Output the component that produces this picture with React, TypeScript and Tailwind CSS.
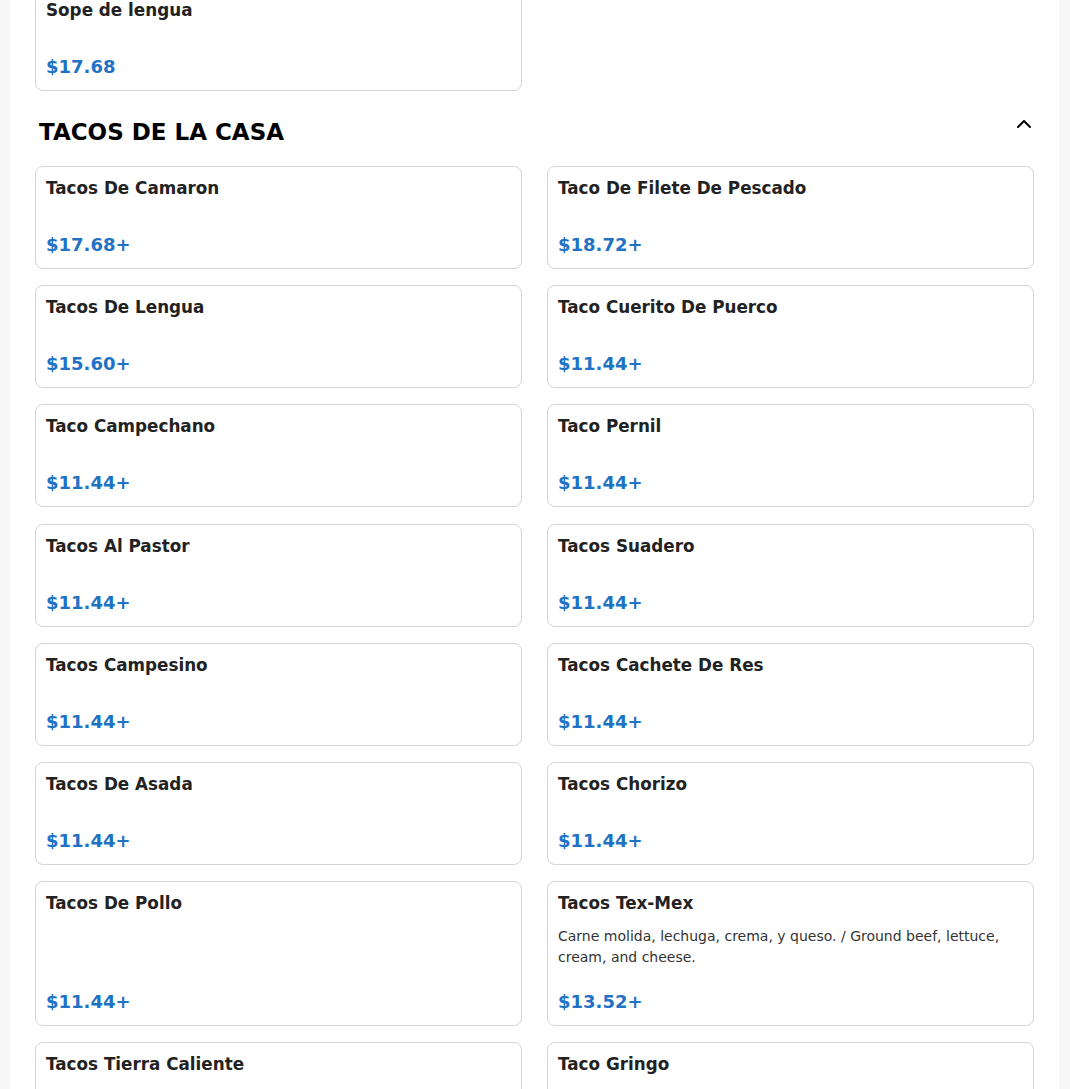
import React from 'react';
import { ChevronUp } from 'lucide-react';

interface MenuItem {
  name: string;
  price: string;
  description?: string;
}

const tacos: MenuItem[] = [
  { name: 'Tacos De Camaron', price: '$17.68+' },
  { name: 'Taco De Filete De Pescado', price: '$18.72+' },
  { name: 'Tacos De Lengua', price: '$15.60+' },
  { name: 'Taco Cuerito De Puerco', price: '$11.44+' },
  { name: 'Taco Campechano', price: '$11.44+' },
  { name: 'Taco Pernil', price: '$11.44+' },
  { name: 'Tacos Al Pastor', price: '$11.44+' },
  { name: 'Tacos Suadero', price: '$11.44+' },
  { name: 'Tacos Campesino', price: '$11.44+' },
  { name: 'Tacos Cachete De Res', price: '$11.44+' },
  { name: 'Tacos De Asada', price: '$11.44+' },
  { name: 'Tacos Chorizo', price: '$11.44+' },
  { name: 'Tacos De Pollo', price: '$11.44+' },
  {
    name: 'Tacos Tex-Mex',
    price: '$13.52+',
    description: 'Carne molida, lechuga, crema, y queso. / Ground beef, lettuce, cream, and cheese.',
  },
  { name: 'Tacos Tierra Caliente', price: '$11.44+' },
  { name: 'Taco Gringo', price: '$11.44+' },
];

const ItemCard: React.FC<{ item: MenuItem }> = ({ item }) => (
  <div className="flex flex-col rounded-lg border border-[#d4d4d4] bg-white px-[10px] pb-[9px] pt-[10px]">
    <div className="flex min-h-[34px] flex-col">
      <h3 className="text-[16.8px] font-bold leading-[22px] text-[#222]">{item.name}</h3>
      {item.description && (
        <p className="mt-3 text-sm leading-[21px] text-[#333]">{item.description}</p>
      )}
    </div>
    <div className="mt-auto pt-5 text-lg font-bold leading-7 text-[#1f72c4]">{item.price}</div>
  </div>
);

export default function App() {
  return (
    <div className="min-h-screen bg-[#f7f7f7] pl-[10px] pr-[11px] font-['DejaVu_Sans',sans-serif]">
      <div className="h-[1089px] overflow-hidden bg-white px-[25px]">
        <div className="-mt-[12px] grid grid-cols-2 gap-x-[25px]">
          <ItemCard item={{ name: 'Sope de lengua', price: '$17.68' }} />
        </div>

        <div className="flex items-start justify-between pb-[18px] pl-1 pt-[25px]">
          <h2 className="text-[23px] font-bold leading-8 text-black">TACOS DE LA CASA</h2>
          <ChevronUp size={24} strokeWidth={2} className="-mr-[2px] -mt-[4px] text-black" />
        </div>

        <div className="grid grid-cols-2 gap-x-[25px] gap-y-[16.2px]">
          {tacos.map((t) => (
            <ItemCard key={t.name} item={t} />
          ))}
        </div>
      </div>
    </div>
  );
}
